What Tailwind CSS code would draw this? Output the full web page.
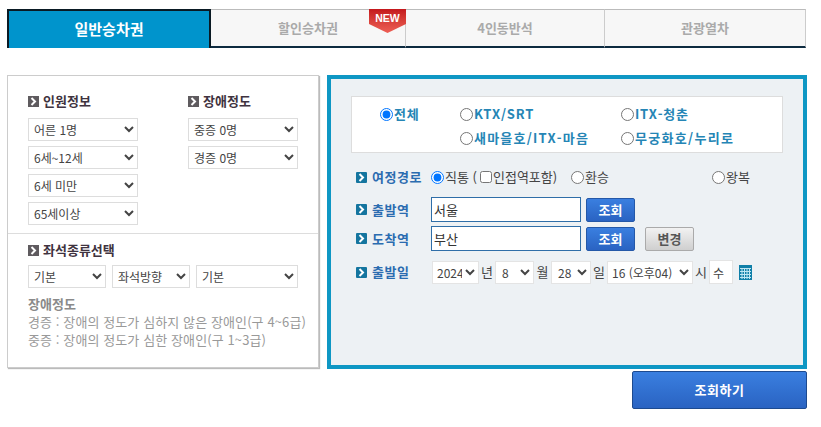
<!DOCTYPE html>
<html lang="ko">
<head>
    <meta charset="UTF-8">
    <meta name="viewport" content="width=device-width, initial-scale=1.0">
    <title>승차권 조회</title>
    <script src="https://cdn.jsdelivr.net/npm/@tailwindcss/browser@4"></script>
</head>
<body class="bg-white font-['Noto_Sans_CJK_KR','Noto_Sans',sans-serif] text-[12px] text-[#444] w-[821px] h-[427px] overflow-hidden">
    <svg class="hidden">
        <symbol id="gray-arrow" viewBox="0 0 11 11"><rect width="11" height="11" fill="#5f5b5f"/><path d="M3.5 2 7 5.5 3.5 9" fill="none" stroke="#fff" stroke-width="2"/></symbol>
        <symbol id="blue-arrow" viewBox="0 0 11 11"><rect width="11" height="11" rx="1" fill="#14759f"/><path d="M3.5 2 7 5.5 3.5 9" fill="none" stroke="#fff" stroke-width="2"/></symbol>
    </svg>

    <!-- tabs -->
    <div class="pt-[9px] pl-[7px] w-[807px]">
        <div class="flex h-[39px] font-bold text-[13px] text-[#aaa]">
            <div class="w-[204px] bg-[#0094cc] border-2 border-b-0 border-[#0a1a24] text-white text-[15px] flex items-center justify-center">일반승차권</div>
            <div class="relative w-[195px] bg-[#f7f7f7] border-t border-t-[#bbb] border-r border-r-[#ccc] border-b-2 border-b-[#0d2b40] flex items-center justify-center">
                할인승차권
                <div class="absolute left-[158px] top-[-1px] w-[37px] h-[24px] bg-linear-to-b from-[#c4161c] to-[#ee5f55] text-white text-[10.5px] leading-[19px] text-center [font-family:'Liberation_Sans'] [clip-path:polygon(0_0,100%_0,100%_62%,50%_100%,0_62%)]">NEW</div>
            </div>
            <div class="w-[199px] bg-[#f7f7f7] border-t border-t-[#bbb] border-r border-r-[#ccc] border-b-2 border-b-[#0d2b40] flex items-center justify-center">4인동반석</div>
            <div class="w-[201px] bg-[#f7f7f7] border-t border-t-[#bbb] border-r border-r-[#ccc] border-b-2 border-b-[#0d2b40] flex items-center justify-center">관광열차</div>
        </div>
    </div>

    <div class="flex pl-[7px] pt-[27px] gap-[8px]">
        <!-- left panel -->
        <div class="w-[312px] h-[293px] border border-[#ccc] shadow-[1px_1px_1px_#bbb]">
            <div class="flex pl-[20px] pt-[16px] h-[158px] border-b border-[#ddd]">
                <div class="w-[160px]">
                    <h3 class="flex items-center gap-[4px] h-[18px] mb-[8px] font-bold text-[13px] text-[#3f3340]"><svg class="w-[11px] h-[11px]"><use href="#gray-arrow"/></svg>인원정보</h3>
                    <div class="flex flex-col gap-[5px]">
                        <select class="w-[110px] h-[23px] pl-[1px] bg-white border border-[#ddd] text-[12px] text-[#444]"><option>어른 1명</option></select>
                        <select class="w-[110px] h-[23px] pl-[1px] bg-white border border-[#ddd] text-[12px] text-[#444]"><option>6세~12세</option></select>
                        <select class="w-[110px] h-[23px] pl-[1px] bg-white border border-[#ddd] text-[12px] text-[#444]"><option>6세 미만</option></select>
                        <select class="w-[110px] h-[23px] pl-[1px] bg-white border border-[#ddd] text-[12px] text-[#444]"><option>65세이상</option></select>
                    </div>
                </div>
                <div>
                    <h3 class="flex items-center gap-[4px] h-[18px] mb-[8px] font-bold text-[13px] text-[#3f3340]"><svg class="w-[11px] h-[11px]"><use href="#gray-arrow"/></svg>장애정도</h3>
                    <div class="flex flex-col gap-[5px]">
                        <select class="w-[110px] h-[23px] pl-[1px] bg-white border border-[#ddd] text-[12px] text-[#444]"><option>중증 0명</option></select>
                        <select class="w-[110px] h-[23px] pl-[1px] bg-white border border-[#ddd] text-[12px] text-[#444]"><option>경증 0명</option></select>
                    </div>
                </div>
            </div>
            <div class="pl-[20px] pt-[7px]">
                <h3 class="flex items-center gap-[4px] h-[18px] mb-[6px] font-bold text-[13px] text-[#3f3340]"><svg class="w-[11px] h-[11px]"><use href="#gray-arrow"/></svg>좌석종류선택</h3>
                <div class="flex gap-[6px] mb-[7px]">
                    <select class="w-[78px] h-[23px] pl-[1px] bg-white border border-[#ddd] text-[12px] text-[#444]"><option>기본</option></select>
                    <select class="w-[78px] h-[23px] pl-[1px] bg-white border border-[#ddd] text-[12px] text-[#444]"><option>좌석방향</option></select>
                    <select class="w-[102px] h-[23px] pl-[1px] bg-white border border-[#ddd] text-[12px] text-[#444]"><option>기본</option></select>
                </div>
                <div class="font-bold text-[13px] leading-[18px] text-[#8a8a8a]">장애정도</div>
                <p class="text-[13px] leading-[18px] tracking-[0.1px] text-[#999] whitespace-nowrap">경증 : 장애의 정도가 심하지 않은 장애인(구 4~6급)</p>
                <p class="text-[13px] leading-[18px] tracking-[0.1px] text-[#999] whitespace-nowrap">중증 : 장애의 정도가 심한 장애인(구 1~3급)</p>
            </div>
        </div>

        <!-- right panel -->
        <div class="w-[480px]">
            <div class="h-[294px] border-4 border-[#0e97c4] bg-[#edf1f4] pl-[20px] pt-[17px]">
                <div class="relative w-[432px] h-[57px] bg-white border border-[#ddd] font-bold text-[13px] tracking-[0.8px] text-[#2585b5]">
                    <div class="grid grid-cols-[80px_161px_1fr] auto-rows-[24px] pl-[28px] pt-[5px]">
                        <label class="flex items-center gap-[1px]"><input type="radio" name="kind" checked class="m-0 w-[13px] h-[13px]">전체</label>
                        <label class="flex items-center gap-[1px]"><input type="radio" name="kind" class="m-0 w-[13px] h-[13px]">KTX/SRT</label>
                        <label class="flex items-center gap-[1px]"><input type="radio" name="kind" class="m-0 w-[13px] h-[13px]">ITX-청춘</label>
                        <span></span>
                        <label class="flex items-center gap-[1px] whitespace-nowrap tracking-[1.2px]"><input type="radio" name="kind" class="m-0 w-[13px] h-[13px]">새마을호/ITX-마음</label>
                        <label class="flex items-center gap-[1px] whitespace-nowrap tracking-[1.3px]"><input type="radio" name="kind" class="m-0 w-[13px] h-[13px]">무궁화호/누리로</label>
                    </div>
                </div>

                <div class="flex items-center h-[20px] mt-[14px] ml-[5px] text-[13px]">
                    <h3 class="flex items-center gap-[5px] w-[75px] font-bold tracking-[0.5px] text-[#2b6cb0]"><svg class="w-[11px] h-[11px]"><use href="#blue-arrow"/></svg>여정경로</h3>
                    <label class="flex items-center gap-[1px] w-[140px] whitespace-nowrap"><input type="radio" name="route" checked class="m-0 w-[13px] h-[13px]">직통 (<input type="checkbox" class="ml-[2px] mr-0 my-0 w-[12px] h-[12px]">인접역포함)</label>
                    <label class="flex items-center gap-[1px] w-[141px]"><input type="radio" name="route" class="m-0 w-[13px] h-[13px]">환승</label>
                    <label class="flex items-center gap-[1px]"><input type="radio" name="route" class="m-0 w-[13px] h-[13px]">왕복</label>
                </div>

                <div class="flex items-center mt-[10px] ml-[5px]">
                    <h3 class="flex items-center gap-[5px] w-[75px] font-bold text-[13px] tracking-[0.5px] text-[#2b6cb0]"><svg class="w-[11px] h-[11px]"><use href="#blue-arrow"/></svg>출발역</h3>
                    <input type="text" value="서울" class="w-[150px] h-[25px] px-[2px] bg-white border border-[#2f6ea8] text-[13px] text-[#333]">
                    <button class="w-[49px] h-[24px] ml-[5px] rounded-[2px] bg-linear-to-b from-[#3a7fe0] to-[#2a63c2] border border-[#2458a8] font-bold text-[13px] text-white">조회</button>
                </div>
                <div class="flex items-center mt-[4px] ml-[5px]">
                    <h3 class="flex items-center gap-[5px] w-[75px] font-bold text-[13px] tracking-[0.5px] text-[#2b6cb0]"><svg class="w-[11px] h-[11px]"><use href="#blue-arrow"/></svg>도착역</h3>
                    <input type="text" value="부산" class="w-[150px] h-[25px] px-[2px] bg-white border border-[#2f6ea8] text-[13px] text-[#333]">
                    <button class="w-[49px] h-[24px] ml-[5px] rounded-[2px] bg-linear-to-b from-[#3a7fe0] to-[#2a63c2] border border-[#2458a8] font-bold text-[13px] text-white">조회</button>
                    <button class="w-[49px] h-[24px] ml-[10px] rounded-[2px] bg-linear-to-b from-[#f2f2f2] to-[#cfcfcf] border border-[#aaa] font-bold text-[13px] text-[#555]">변경</button>
                </div>

                <div class="flex items-center h-[24px] mt-[9px] ml-[5px] text-[13px]">
                    <h3 class="flex items-center gap-[5px] w-[76px] font-bold tracking-[0.5px] text-[#2b6cb0]"><svg class="w-[11px] h-[11px]"><use href="#blue-arrow"/></svg>출발일</h3>
                    <select class="w-[47px] h-[23px] bg-white border border-[#e4e4e4] text-[12px] text-[#444]"><option>2024</option></select>
                    <span class="w-[16px] text-center">년</span>
                    <select class="w-[39px] h-[23px] pl-[2px] bg-white border border-[#e4e4e4] text-[12px] text-[#444]"><option>8</option></select>
                    <span class="w-[17px] text-center">월</span>
                    <select class="w-[40px] h-[23px] pl-[2px] bg-white border border-[#e4e4e4] text-[12px] text-[#444]"><option>28</option></select>
                    <span class="w-[16px] text-center">일</span>
                    <select class="w-[86px] h-[23px] bg-white border border-[#e4e4e4] text-[12px] text-[#444]"><option>16 (오후04)</option></select>
                    <span class="w-[16px] text-center">시</span>
                    <input type="text" value="수" class="w-[24px] h-[24px] pl-[3px] bg-white border border-[#e4e4e4] text-[12px] text-[#444]">
                    <svg class="w-[13px] h-[15px] ml-[6px]" viewBox="0 0 13 15">
                        <rect width="13" height="15" fill="#0f7fa8"/>
                        <path d="M1 3.5h11M1 6.5h11M1 9.5h11M1 12.5h11M3 3v11M5.5 3v11M8 3v11M10.5 3v11" stroke="#bfe6f2" stroke-width="1"/>
                    </svg>
                </div>
            </div>
            <div class="flex justify-end mt-[2px]">
                <button class="w-[175px] h-[38px] rounded-[2px] bg-linear-to-b from-[#3a7fe0] to-[#2a63c2] border border-[#1d4a8f] font-bold text-[13px] tracking-[0.5px] text-white">조회하기</button>
            </div>
        </div>
    </div>
</body>
</html>
